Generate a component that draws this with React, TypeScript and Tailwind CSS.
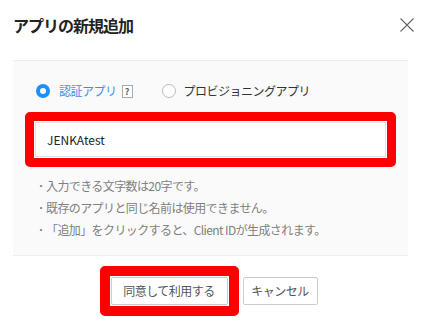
import { useState } from 'react';

const jp = '"Noto Sans CJK JP", "Noto Sans", sans-serif';

export default function App() {
  const [kind, setKind] = useState('auth');
  const [name, setName] = useState('JENKAtest');

  return (
    <div className="w-[421px] h-[321px] bg-white overflow-hidden" style={{ fontFamily: jp }}>
      <div className="h-[60px] px-[13px] flex items-center justify-between">
        <h1 className="text-[16px] font-bold text-[#222] tracking-[-1px] -mt-[10px]">アプリの新規追加</h1>
        <button className="w-[16px] h-[16px] -mr-[7px] -mt-[10px] text-[#666]">
          <svg viewBox="0 0 16 16" className="w-full h-full" fill="none" stroke="currentColor" strokeWidth="1.1">
            <path d="M1.5 1.5 L14.5 14.5 M14.5 1.5 L1.5 14.5" />
          </svg>
        </button>
      </div>

      <div className="mx-[13px] bg-[#fafafa] border-t border-b border-[#eeeeee] px-[23px] pt-[20px] pb-[14px]">
        <div className="flex items-center h-[20px] text-[12px] tracking-[-0.5px]">
          <label className="flex items-center cursor-pointer" onClick={() => setKind('auth')}>
            <span className={kind === 'auth' ? 'w-[14px] h-[14px] rounded-full border-[4px] border-[#1e8fff] bg-white' : 'w-[14px] h-[14px] rounded-full border border-[#bbbbbb] bg-white'} />
            <span className={kind === 'auth' ? 'ml-[9px] text-[#3b8ff0]' : 'ml-[9px] text-[#333]'}>認証アプリ</span>
          </label>
          <span className="ml-[5px] w-[11px] h-[13px] border border-[#aaaaaa] text-[9px] leading-[11px] text-center text-[#666] font-bold bg-white tracking-normal">?</span>
          <label className="flex items-center ml-[29px] cursor-pointer" onClick={() => setKind('prov')}>
            <span className={kind === 'prov' ? 'w-[14px] h-[14px] rounded-full border-[4px] border-[#1e8fff] bg-white' : 'w-[14px] h-[14px] rounded-full border border-[#bbbbbb] bg-white'} />
            <span className={kind === 'prov' ? 'ml-[8px] text-[#3b8ff0]' : 'ml-[8px] text-[#333]'}>プロビジョニングアプリ</span>
          </label>
        </div>

        <div className="-mx-[11px] mt-[11px] rounded-[5px] border-[9px] border-[#ff0000] bg-white p-[1px]">
          <input
            value={name}
            onChange={(e) => setName(e.target.value)}
            className="w-full h-[35px] border border-[#e3e3e3] px-[11px] text-[12px] text-[#222] outline-none"
            style={{ fontFamily: jp }}
          />
        </div>

        <ul className="mt-[8px] text-[12px] text-[#808080] leading-[22px] tracking-[-0.6px]">
          <li className="flex"><span className="w-[10px] text-[10px]">・</span><span>入力できる文字数は20字です。</span></li>
          <li className="flex"><span className="w-[10px] text-[10px]">・</span><span>既存のアプリと同じ名前は使用できません。</span></li>
          <li className="flex"><span className="w-[10px] text-[10px]">・</span><span>「追加」をクリックすると、Client IDが生成されます。</span></li>
        </ul>
      </div>

      <div className="flex justify-center items-center mt-[10px] pr-[4px] gap-[4px]">
        <div className="rounded-[5px] border-[10px] border-[#ff0000] p-[1px]">
          <button className="w-[117px] h-[28px] border border-[#cccccc] rounded-[2px] bg-white text-[12px] tracking-[-0.5px] text-[#555]">同意して利用する</button>
        </div>
        <button className="w-[75px] h-[28px] border border-[#cccccc] rounded-[2px] bg-white text-[12px] tracking-[-0.5px] text-[#555]">キャンセル</button>
      </div>
    </div>
  );
}
